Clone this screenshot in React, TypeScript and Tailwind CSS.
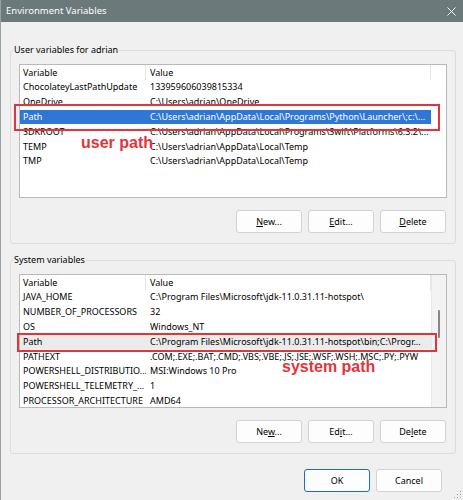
import React from 'react'

type Row = { name: string; value: string }

const userVars: Row[] = [
  { name: 'ChocolateyLastPathUpdate', value: '133959606039815334' },
  { name: 'OneDrive', value: 'C:\\Users\\adrian\\OneDrive' },
  { name: 'Path', value: 'C:\\Users\\adrian\\AppData\\Local\\Programs\\Python\\Launcher\\;c:\\...' },
  { name: 'SDKROOT', value: 'C:\\Users\\adrian\\AppData\\Local\\Programs\\Swift\\Platforms\\6.3.2\\...' },
  { name: 'TEMP', value: 'C:\\Users\\adrian\\AppData\\Local\\Temp' },
  { name: 'TMP', value: 'C:\\Users\\adrian\\AppData\\Local\\Temp' },
]

const systemVars: Row[] = [
  { name: 'JAVA_HOME', value: 'C:\\Program Files\\Microsoft\\jdk-11.0.31.11-hotspot\\' },
  { name: 'NUMBER_OF_PROCESSORS', value: '32' },
  { name: 'OS', value: 'Windows_NT' },
  { name: 'Path', value: 'C:\\Program Files\\Microsoft\\jdk-11.0.31.11-hotspot\\bin;C:\\Progr...' },
  { name: 'PATHEXT', value: '.COM;.EXE;.BAT;.CMD;.VBS;.VBE;.JS;.JSE;.WSF;.WSH;.MSC;.PY;.PYW' },
  { name: 'POWERSHELL_DISTRIBUTIO...', value: 'MSI:Windows 10 Pro' },
  { name: 'POWERSHELL_TELEMETRY_...', value: '1' },
  { name: 'PROCESSOR_ARCHITECTURE', value: 'AMD64' },
]

const Button = ({ children, primary }: { children: React.ReactNode; primary?: boolean }) => (
  <button
    className={
      primary
        ? 'w-[66px] h-[23px] rounded-[3px] border border-[#1a6fc4] bg-[#fdfdfd] text-[9px] text-black'
        : 'w-[66px] h-[23px] rounded-[3px] border border-[#d3d3d3] bg-[#fdfdfd] text-[9px] text-black'
    }
  >
    {children}
  </button>
)

const VarList = ({
  rows,
  selected,
  mode,
  scroll,
}: {
  rows: Row[]
  selected: number
  mode: 'focus' | 'blur'
  scroll?: boolean
}) => (
  <div className="h-[134px] border border-[#b9b9b9] bg-white flex overflow-hidden">
    <div className="w-[411px] flex flex-col">
      <div className="h-[15px] flex items-center shrink-0">
        <div className="w-[126px] h-full pl-[3px] flex items-center border-r border-[#e5e5e5]">Variable</div>
        <div className="flex-1 h-full pl-[4px] flex items-center border-r border-[#e5e5e5]">Value</div>
      </div>
      {rows.map((r, i) => {
        const sel = i === selected
        const bg = sel ? (mode === 'focus' ? 'bg-[#2f77d5] text-white' : 'bg-[#ebebeb]') : ''
        return (
          <div key={r.name} className={`h-[14.8px] shrink-0 flex items-center whitespace-nowrap ${bg}`}>
            <div className="w-[126px] pl-[3px] overflow-hidden">{r.name}</div>
            <div className="flex-1 pl-[4px] overflow-hidden">{r.value}</div>
          </div>
        )
      })}
    </div>
    <div className={scroll ? 'flex-1 bg-[#f3f3f3] border-l border-[#e8e8e8] relative' : 'flex-1'}>
      {scroll && <div className="absolute left-[6px] top-[35px] w-[2px] h-[28px] rounded-full bg-[#858585]" />}
    </div>
  </div>
)

const Group = ({ title, children }: { title: string; children: React.ReactNode }) => (
  <fieldset className="w-[446px] border border-[#dcdcdc] rounded-[3px]">
    <legend className="ml-[2px] px-[1px] text-[9px] leading-[14px]">{title}</legend>
    {children}
  </fieldset>
)

const noteFont = { fontFamily: '"Liberation Sans", Arial, sans-serif' }

export default function App() {
  return (
    <div
      className="relative w-[463px] h-[500px] bg-[#f0f0f0] border-l border-[#98a2a4] text-[9px] leading-[12px] text-black overflow-hidden"
      style={{ fontFamily: '"Noto Sans", sans-serif' }}
    >
      {/* title bar */}
      <div className="h-[22px] bg-[#6b797b] flex items-center justify-between pl-[5px] pr-[7px]">
        <span className="text-white text-[9.5px]">Environment Variables</span>
        <svg width="9" height="9" viewBox="0 0 9 9">
          <path d="M0.5 0.5 L8.5 8.5 M8.5 0.5 L0.5 8.5" stroke="#fff" strokeWidth="1" />
        </svg>
      </div>

      <div className="pl-[9px] pt-[21px]">
        <Group title="User variables for adrian">
          <div className="relative mx-[8px] mt-[7px]">
            <VarList rows={userVars} selected={2} mode="focus" />
            {/* annotation */}
            <div className="absolute left-[-5px] top-[40px] w-[426px] h-[27px] border-2 border-[#e3343a]" />
            <div className="absolute left-[62px] top-[71px] text-[16px] font-bold text-[#e3343a] leading-none" style={noteFont}>
              user path
            </div>
          </div>
          <div className="flex justify-end gap-[6px] pr-[9px] mt-[12px] mb-[10px]">
            <Button><u>N</u>ew...</Button>
            <Button><u>E</u>dit...</Button>
            <Button><u>D</u>elete</Button>
          </div>
        </Group>

        <div className="mt-[9px]">
          <Group title="System variables">
            <div className="relative mx-[8px] mt-[7px]">
              <VarList rows={systemVars} selected={3} mode="blur" scroll />
              <div className="absolute left-[-2px] top-[59px] w-[420px] h-[19px] border-2 border-[#e3343a]" />
              <div className="absolute left-[263px] top-[85px] text-[16px] font-bold text-[#e3343a] leading-none" style={noteFont}>
                system path
              </div>
            </div>
            <div className="flex justify-end gap-[6px] pr-[9px] mt-[12px] mb-[10px]">
              <Button>Ne<u>w</u>...</Button>
              <Button>Ed<u>i</u>t...</Button>
              <Button>De<u>l</u>ete</Button>
            </div>
          </Group>
        </div>

        <div className="flex justify-end gap-[6px] pr-[21px] mt-[15px]">
          <Button primary>OK</Button>
          <Button>Cancel</Button>
        </div>
      </div>

      {/* resize grip */}
      <svg className="absolute right-[1px] bottom-[1px]" width="8" height="8" viewBox="0 0 8 8">
        <rect x="6" y="0" width="1" height="1" fill="#9a9a9a" />
        <rect x="3" y="3" width="1" height="1" fill="#9a9a9a" />
        <rect x="6" y="3" width="1" height="1" fill="#9a9a9a" />
        <rect x="0" y="6" width="1" height="1" fill="#9a9a9a" />
        <rect x="3" y="6" width="1" height="1" fill="#9a9a9a" />
        <rect x="6" y="6" width="1" height="1" fill="#9a9a9a" />
      </svg>
    </div>
  )
}
